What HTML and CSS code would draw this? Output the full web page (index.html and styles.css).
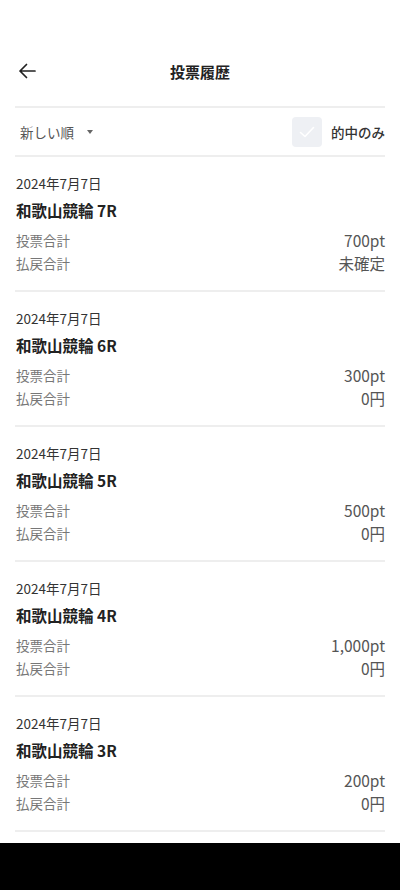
FILE: index.html
```html
<!DOCTYPE html>
<html lang="ja">
  <head>
    <meta charset="UTF-8" />
    <title>投票履歴</title>
    <link rel="stylesheet" href="styles.css">
  </head>
  <body>
    <div class="screen">
      <main class="page">
        <header class="topbar">
          <button class="back" aria-label="戻る">
            <svg width="18" height="16" viewBox="0 0 18 16"><path d="M17 8H2M8.5 1.5L2 8l6.5 6.5" fill="none" stroke="#222" stroke-width="1.7" stroke-linecap="round" stroke-linejoin="round"/></svg>
          </button>
          <h1 class="title">投票履歴</h1>
        </header>

        <div class="filters">
          <div class="sort">新しい順 <span class="caret"></span></div>
          <label class="hit">
            <span class="check">
              <svg width="16" height="12" viewBox="0 0 16 12"><path d="M1.5 6.5l4.5 4L14.5 1.5" fill="none" stroke="#fff" stroke-width="1.6" stroke-linecap="round" stroke-linejoin="round"/></svg>
            </span>
            的中のみ
          </label>
        </div>

        <ul class="history" id="history"></ul>
      </main>
      <div class="navbar"></div>
    </div>

    <script>
      // 投票履歴データ
      const items = [
        { race: "和歌山競輪 7R", bet: "700pt", pay: "未確定" },
        { race: "和歌山競輪 6R", bet: "300pt", pay: "0円" },
        { race: "和歌山競輪 5R", bet: "500pt", pay: "0円" },
        { race: "和歌山競輪 4R", bet: "1,000pt", pay: "0円" },
        { race: "和歌山競輪 3R", bet: "200pt", pay: "0円" }
      ];

      const list = document.getElementById("history");
      for (const item of items) {
        const li = document.createElement("li");
        li.className = "card";
        li.innerHTML =
          '<div class="date">2024年7月7日</div>' +
          '<div class="race">' + item.race + '</div>' +
          '<div class="row"><span class="label">投票合計</span><span class="value">' + item.bet + '</span></div>' +
          '<div class="row"><span class="label">払戻合計</span><span class="value">' + item.pay + '</span></div>';
        list.appendChild(li);
      }
    </script>
  </body>
</html>
```

FILE: styles.css
```css
body {
  margin: 0;
  font-family: "Noto Sans CJK JP", "Noto Sans", sans-serif;
  color: #222;
  background: #fff;
}

.screen {
  width: 400px;
  height: 890px;
  display: flex;
  flex-direction: column;
  overflow: hidden;
}

.page {
  flex: 1;
  padding: 0 15px;
  overflow: hidden;
}

.navbar {
  height: 47px;
  background: #000;
}

/* ヘッダー */
.topbar {
  position: relative;
  height: 42px;
  margin-top: 50px;
  display: flex;
  align-items: center;
  justify-content: center;
  border-bottom: 2px solid #eeeeee;
  padding-bottom: 14px;
  box-sizing: content-box;
}

.back {
  position: absolute;
  left: 3px;
  top: 12px;
  border: none;
  background: none;
  padding: 0;
  width: 20px;
  height: 18px;
  display: flex;
  align-items: center;
}

.title {
  margin: 0;
  font-size: 15px;
  font-weight: 700;
  line-height: 22px;
  padding-top: 2px;
}

/* 絞り込み */
.filters {
  display: flex;
  justify-content: space-between;
  align-items: center;
  height: 47px;
  border-bottom: 2px solid #eeeeee;
}

.sort {
  display: flex;
  align-items: center;
  padding-left: 5px;
  font-size: 13.5px;
  color: #555;
}

.caret {
  margin-left: 13px;
  width: 0;
  height: 0;
  border-left: 3.5px solid transparent;
  border-right: 3.5px solid transparent;
  border-top: 4.5px solid #666;
}

.hit {
  display: flex;
  align-items: center;
  gap: 9px;
  font-size: 13.5px;
  font-weight: 500;
  color: #333;
}

.check {
  width: 30px;
  height: 30px;
  border-radius: 4px;
  background: #eef0f4;
  display: flex;
  align-items: center;
  justify-content: center;
}

/* 履歴リスト */
.history {
  list-style: none;
  margin: 0;
  padding: 0;
}

.card {
  height: 135px;
  padding: 16px 0 0 1px;
  box-sizing: border-box;
  border-bottom: 2px solid #eeeeee;
}

.date {
  font-size: 13.5px;
  line-height: 20px;
  color: #333;
}

.race {
  margin-top: 6px;
  font-size: 15.5px;
  font-weight: 700;
  line-height: 22px;
  color: #222;
}

.row {
  display: flex;
  justify-content: space-between;
  align-items: center;
  height: 23px;
}

.race + .row {
  margin-top: 7px;
}

.label {
  font-size: 13.5px;
  color: #777;
}

.value {
  font-size: 15.5px;
  color: #555;
}
```
